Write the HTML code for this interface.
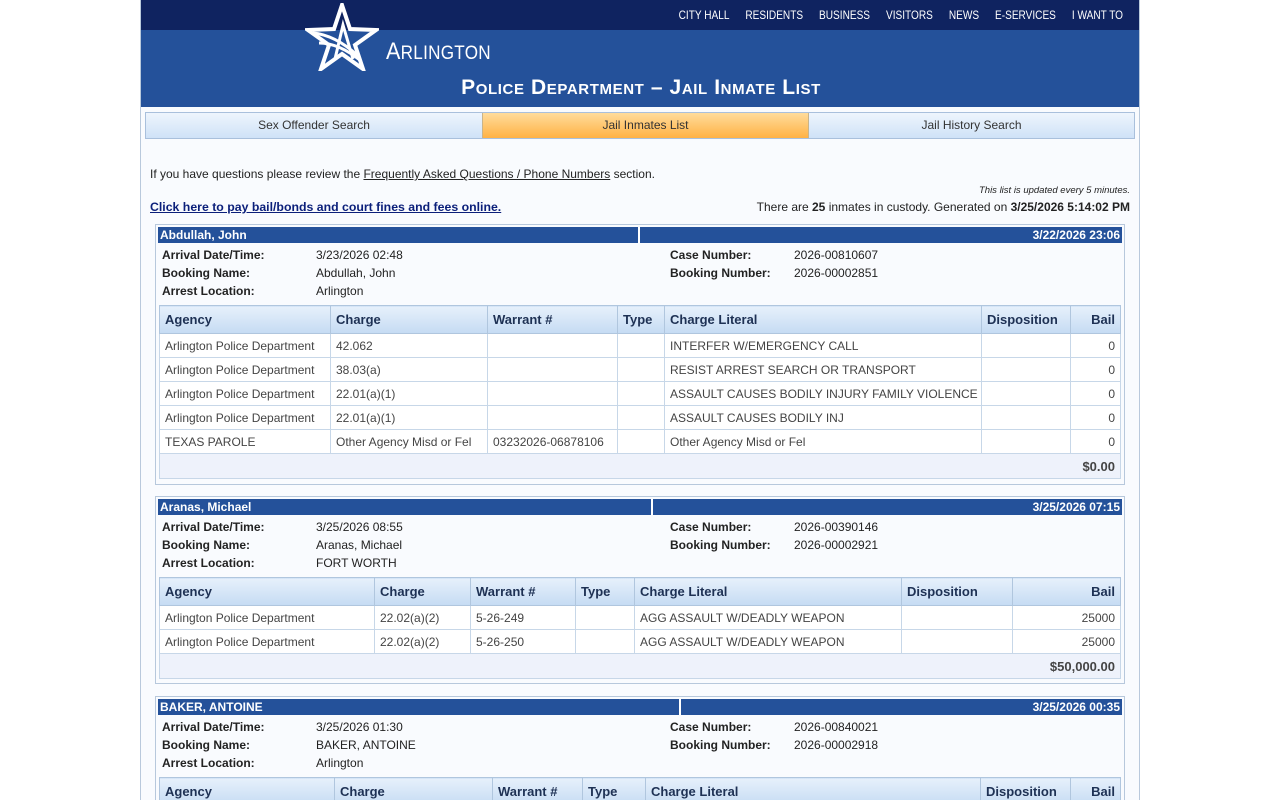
<!DOCTYPE html>
<html><head><meta charset="utf-8"><style>
*{box-sizing:border-box;margin:0;padding:0}
body{width:1280px;height:800px;overflow:hidden;background:#fff;font-family:"Liberation Sans",Arial,sans-serif;font-size:12px;color:#222;position:relative}
#page{position:absolute;left:140px;top:0;width:1000px;height:800px;overflow:hidden;background:#f9fbfe;border-left:1px solid #b9c9dc;border-right:1px solid #b9c9dc}
#top{position:absolute;left:0;top:0;width:1000px;height:30px;background:#0f2360}
#ban{position:absolute;left:0;top:30px;width:1000px;height:77px;background:#24519a}
#nav{position:absolute;right:18px;top:8px;color:#fff;font-size:12px;transform:scaleX(.84);transform-origin:right top;white-space:nowrap}
#nav span{margin-left:19px}
#logo{position:absolute;left:245px;top:38px;color:#fff;font-size:24px;letter-spacing:.3px;transform:scaleX(.9);transform-origin:left top}
#title{position:absolute;left:0;width:1000px;top:76px;text-align:center;color:#fff;font-weight:bold;font-size:21px;font-variant:small-caps;letter-spacing:.6px}
#tabs{position:absolute;left:4px;top:112px;width:990px;height:27px;border:1px solid #a9c0dc;display:flex}
#tabs div{text-align:center;line-height:25px;font-size:12px;color:#333;background:linear-gradient(#eef5fd,#cfe2f7)}
#tabs .on{background:linear-gradient(#ffdc9c,#ffb244);border-left:1px solid #c9b48a;border-right:1px solid #c9b48a}
.t{position:absolute}
.rec{position:absolute;left:14px;width:970px;border:1px solid #b7c8dc;background:#f9fbfe}
.nb{display:flex;height:16px;margin:2px 2px 0 2px;color:#fff;font-weight:bold;font-size:12px;line-height:16px}
.nb .a{background:#24519a;padding-left:2px;border-right:2px solid #fff}
.nb .b{background:#24519a;flex:1;text-align:right;padding-right:2px}
.info{position:relative;height:62px}
.info div{position:absolute;font-size:12px}
table{position:absolute;left:3px;border-collapse:collapse;table-layout:fixed;width:962px;font-size:12px}
th{height:28px;text-align:left;padding-left:5px;font-weight:bold;color:#1e3154;background:linear-gradient(#e6f0fb,#c5dbf3);border:1px solid #b0c6de;font-size:13px}
td{height:24px;padding-left:5px;border:1px solid #c7d7e8;background:#fff;color:#444;white-space:nowrap;overflow:hidden}
td.r,th.r{text-align:right;padding-right:5px}
tr.tot td{background:#eef2fb;height:25px;font-weight:bold;font-size:13px;color:#444}
</style></head><body>
<div id="page">
<div id="top"><div id="nav"><span>CITY HALL</span><span>RESIDENTS</span><span>BUSINESS</span><span>VISITORS</span><span>NEWS</span><span>E-SERVICES</span><span>I WANT TO</span></div></div>
<div id="ban"></div>
<svg style="position:absolute;left:164px;top:3px" width="74" height="68" viewBox="0 0 74 68"><path d="M37 2 L45 26 L71 27 L50 42 L58 66 L37 51 L16 66 L24 42 L3 27 L29 26 Z" fill="none" stroke="#fff" stroke-width="4"/><path d="M8 30 Q30 32 52 52 M14 40 Q34 40 56 58 M30 56 L38 22 L48 56" fill="none" stroke="#fff" stroke-width="3"/></svg>
<div id="logo">A<span style="font-size:19px">RLINGTON</span></div>
<div id="title">Police Department – Jail Inmate List</div>
<div id="tabs"><div style="width:336px">Sex Offender Search</div><div class="on" style="width:327px">Jail Inmates List</div><div style="flex:1">Jail History Search</div></div>
<div class="t" style="left:9px;top:167px;font-size:12px">If you have questions please review the <u>Frequently Asked Questions / Phone Numbers</u> section.</div>
<div class="t" style="right:9px;top:185px;font-size:9.5px;font-style:italic">This list is updated every 5 minutes.</div>
<div class="t" style="left:9px;top:200px;font-weight:bold;color:#0b1f7a;text-decoration:underline;font-size:12.3px">Click here to pay bail/bonds and court fines and fees online.</div>
<div class="t" style="right:9px;top:200px;font-size:12px">There are <b>25</b> inmates in custody. Generated on <b>3/25/2026 5:14:02 PM</b></div>

<div class="rec" style="top:224px;height:261px">
<div class="nb"><div class="a" style="width:482px">Abdullah, John</div><div class="b">3/22/2026 23:06</div></div>
<div class="info">
<div style="left:6px;top:5px"><b>Arrival Date/Time:</b></div><div style="left:160px;top:5px">3/23/2026 02:48</div>
<div style="left:6px;top:23px"><b>Booking Name:</b></div><div style="left:160px;top:23px">Abdullah, John</div>
<div style="left:6px;top:41px"><b>Arrest Location:</b></div><div style="left:160px;top:41px">Arlington</div>
<div style="left:514px;top:5px"><b>Case Number:</b></div><div style="left:638px;top:5px">2026-00810607</div>
<div style="left:514px;top:23px"><b>Booking Number:</b></div><div style="left:638px;top:23px">2026-00002851</div>
</div>
<table style="top:80px"><colgroup><col style="width:171px"><col style="width:157px"><col style="width:130px"><col style="width:47px"><col style="width:317px"><col style="width:89px"><col></colgroup>
<tr><th>Agency</th><th>Charge</th><th>Warrant #</th><th>Type</th><th>Charge Literal</th><th>Disposition</th><th class="r">Bail</th></tr>
<tr><td>Arlington Police Department</td><td>42.062</td><td></td><td></td><td>INTERFER W/EMERGENCY CALL</td><td></td><td class="r">0</td></tr>
<tr><td>Arlington Police Department</td><td>38.03(a)</td><td></td><td></td><td>RESIST ARREST SEARCH OR TRANSPORT</td><td></td><td class="r">0</td></tr>
<tr><td>Arlington Police Department</td><td>22.01(a)(1)</td><td></td><td></td><td>ASSAULT CAUSES BODILY INJURY FAMILY VIOLENCE</td><td></td><td class="r">0</td></tr>
<tr><td>Arlington Police Department</td><td>22.01(a)(1)</td><td></td><td></td><td>ASSAULT CAUSES BODILY INJ</td><td></td><td class="r">0</td></tr>
<tr><td>TEXAS PAROLE</td><td>Other Agency Misd or Fel</td><td>03232026-06878106</td><td></td><td>Other Agency Misd or Fel</td><td></td><td class="r">0</td></tr>
<tr class="tot"><td colspan="7" class="r">$0.00</td></tr>
</table></div>

<div class="rec" style="top:496px;height:188px">
<div class="nb"><div class="a" style="width:495px">Aranas, Michael</div><div class="b">3/25/2026 07:15</div></div>
<div class="info">
<div style="left:6px;top:5px"><b>Arrival Date/Time:</b></div><div style="left:160px;top:5px">3/25/2026 08:55</div>
<div style="left:6px;top:23px"><b>Booking Name:</b></div><div style="left:160px;top:23px">Aranas, Michael</div>
<div style="left:6px;top:41px"><b>Arrest Location:</b></div><div style="left:160px;top:41px">FORT WORTH</div>
<div style="left:514px;top:5px"><b>Case Number:</b></div><div style="left:638px;top:5px">2026-00390146</div>
<div style="left:514px;top:23px"><b>Booking Number:</b></div><div style="left:638px;top:23px">2026-00002921</div>
</div>
<table style="top:80px"><colgroup><col style="width:215px"><col style="width:96px"><col style="width:105px"><col style="width:59px"><col style="width:267px"><col style="width:111px"><col></colgroup>
<tr><th>Agency</th><th>Charge</th><th>Warrant #</th><th>Type</th><th>Charge Literal</th><th>Disposition</th><th class="r">Bail</th></tr>
<tr><td>Arlington Police Department</td><td>22.02(a)(2)</td><td>5-26-249</td><td></td><td>AGG ASSAULT W/DEADLY WEAPON</td><td></td><td class="r">25000</td></tr>
<tr><td>Arlington Police Department</td><td>22.02(a)(2)</td><td>5-26-250</td><td></td><td>AGG ASSAULT W/DEADLY WEAPON</td><td></td><td class="r">25000</td></tr>
<tr class="tot"><td colspan="7" class="r">$50,000.00</td></tr>
</table></div>

<div class="rec" style="top:696px;height:120px">
<div class="nb"><div class="a" style="width:523px">BAKER, ANTOINE</div><div class="b">3/25/2026 00:35</div></div>
<div class="info">
<div style="left:6px;top:5px"><b>Arrival Date/Time:</b></div><div style="left:160px;top:5px">3/25/2026 01:30</div>
<div style="left:6px;top:23px"><b>Booking Name:</b></div><div style="left:160px;top:23px">BAKER, ANTOINE</div>
<div style="left:6px;top:41px"><b>Arrest Location:</b></div><div style="left:160px;top:41px">Arlington</div>
<div style="left:514px;top:5px"><b>Case Number:</b></div><div style="left:638px;top:5px">2026-00840021</div>
<div style="left:514px;top:23px"><b>Booking Number:</b></div><div style="left:638px;top:23px">2026-00002918</div>
</div>
<table style="top:80px"><colgroup><col style="width:175px"><col style="width:158px"><col style="width:90px"><col style="width:63px"><col style="width:335px"><col style="width:90px"><col></colgroup>
<tr><th>Agency</th><th>Charge</th><th>Warrant #</th><th>Type</th><th>Charge Literal</th><th>Disposition</th><th class="r">Bail</th></tr>
</table></div>
</div>
</body></html>
